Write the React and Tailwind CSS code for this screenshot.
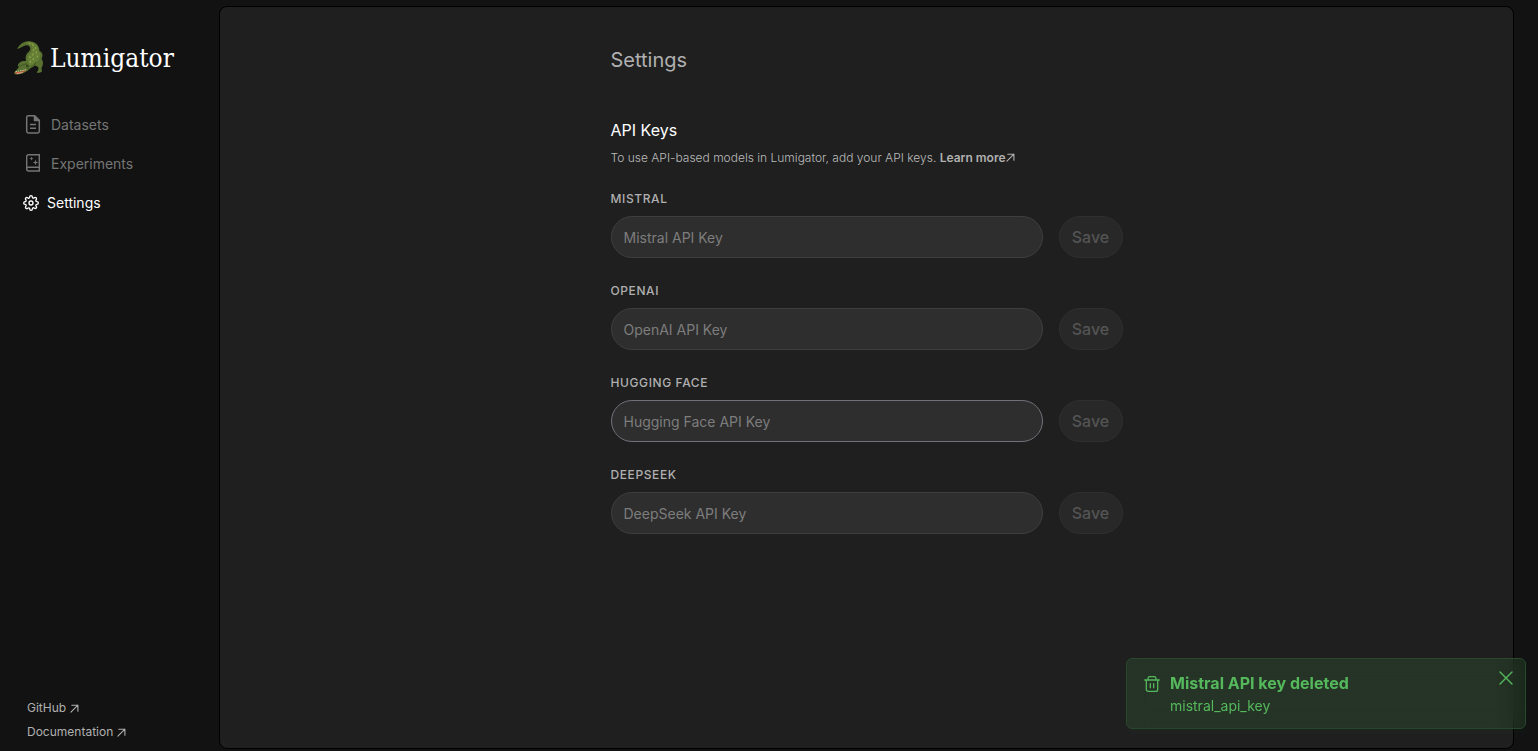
import React from 'react';
import { FiSettings } from 'react-icons/fi';

const providers = [
  { id: 'mistral', label: 'Mistral', placeholder: 'Mistral API Key' },
  { id: 'openai', label: 'OpenAI', placeholder: 'OpenAI API Key' },
  { id: 'huggingface', label: 'Hugging Face', placeholder: 'Hugging Face API Key', active: true },
  { id: 'deepseek', label: 'DeepSeek', placeholder: 'DeepSeek API Key' },
];

function Crocodile() {
  return (
    <svg width="32" height="36" viewBox="0 0 32 36" aria-hidden="true">
      <path d="M4 9C7 4 10 1.200 16 1.200C22.500 1.200 26.500 5.500 26.500 11C29.500 12.500 30.500 15 28.500 19C31 22 30 25 28.500 28L29 31.500C27.500 33 25.500 32.500 24 33C23.500 31.500 25.500 31 25.500 28.500C25.500 26.500 24 26.500 22 25.500C20 27 18.500 27.500 16.500 29C14 31.500 9 34.500 4 34.500C1 34.500 .5 33 2 31.500C4 29.500 5.500 28 6 26.500C4 26.500 4.500 24 8 21.500C10 20.500 11 21 13 21C12 16 13.500 13.500 16 11.500C18 9.500 17.500 6.500 15 5.500C11.500 4.500 7.500 8.500 4 9Z" fill="#587130" />
      <path d="M14 1.700C22 1.200 25.500 6 25.500 11C28 13.500 27.500 17 25.500 20C23.500 22.500 20.500 25 17 25.500C15 23.500 14 20 15 16C16 13.500 20 12.500 19.500 8C19 5 16.500 3.500 12.500 3.200Z" fill="#657f36" />
      <path d="M6 26C8 26.500 10 24 13 24C16 24.500 16 27 14.500 29M18 27.500C20.500 26.500 22 24.500 22.500 22" fill="none" stroke="#405820" strokeWidth="1" />
      <path d="M16.500 3.200l.5.500M19.500 4.500l.3.700M22.500 7.500v.8M20.500 9.500l-.2 1M23.500 12l-.2 1M20 14l-.3 1M24.500 16l-.4 1M17 16.500l-.2 1M20.500 18.500l-.4 1M17.500 21.500l-.4.800" stroke="#95a548" strokeWidth="1.200" strokeLinecap="round" />
      <path d="M2.300 31.800C5.500 32.500 9 31.500 13.500 29.700C11.500 32 7.500 34 4 33.700C2.500 33.600 2 32.800 2.300 31.800Z" fill="#cc5a42" />
      <path d="M2.500 31.700L13.200 29.700M4 33.700L9.500 32.500" stroke="#ead9bc" strokeWidth=".8" strokeDasharray="1.500 .8" />
      <circle cx="14" cy="26" r="1" fill="#26371b" />
    </svg>
  );
}

function DocumentIcon() {
  return (
    <svg width="16" height="20" viewBox="0 0 16 20" fill="none" stroke="currentColor" strokeWidth="1.500" strokeLinejoin="round" aria-hidden="true">
      <path d="M3 .8H9.500L14.300 5.500V16.200A1.700 1.700 0 0 1 12.600 17.900H3.400A1.700 1.700 0 0 1 1.700 16.200V2.500A1.700 1.700 0 0 1 3 .8Z" />
      <path d="M9.500 .8V5.500H14.300Z" fill="currentColor" />
      <path d="M5 9.500H11M5 13.200H11" />
    </svg>
  );
}

function ExperimentsIcon() {
  return (
    <svg width="16" height="20" viewBox="0 0 16 20" fill="none" stroke="currentColor" strokeWidth="1.400" aria-hidden="true">
      <path d="M14.300 .8H3.400A1.700 1.700 0 0 0 1.700 2.500V15A2 2 0 0 0 3.700 17H14.300V.8ZM1.700 15A2 2 0 0 1 3.700 13.200H14.300" />
      <path d="M6.500 2.800L7.100 4.100L8.400 4.700L7.100 5.300L6.500 6.600L5.900 5.300L4.600 4.700L5.900 4.100Z" fill="currentColor" stroke="none" />
      <path d="M10.500 5.500L11.200 7.800L13.300 8.500L11.200 9.200L10.500 11.500L9.800 9.200L7.700 8.500L9.800 7.800Z" fill="currentColor" stroke="none" />
    </svg>
  );
}

function ArrowUpRight({ className }) {
  return (
    <svg width="9" height="9" viewBox="0 0 9 9" fill="none" stroke="currentColor" strokeWidth="1.100" strokeLinecap="round" strokeLinejoin="round" className={className} aria-hidden="true">
      <path d="M1.800 1.200H7.900V7.300M7.900 1.200L.9 8.200" />
    </svg>
  );
}

function TrashIcon() {
  return (
    <svg width="16" height="16" viewBox="0 0 16 16" fill="none" stroke="currentColor" strokeWidth="1.300" strokeLinecap="round" strokeLinejoin="round" aria-hidden="true">
      <path d="M.7 4H15.300M4 4V2.500A1.900 1.900 0 0 1 5.900 .7H10.100A1.900 1.900 0 0 1 12 2.500V4M2.300 4V13.400A1.900 1.900 0 0 0 4.200 15.300H11.800A1.900 1.900 0 0 0 13.700 13.400V4M6.300 7.700V11.700M9.700 7.700V11.700" />
    </svg>
  );
}

function Sidebar() {
  return (
    <aside className="flex w-[219px] shrink-0 flex-col">
      <a href="#" className="mt-10 ml-[13px] flex h-9 items-center gap-[5px] text-white">
        <Crocodile />
        <span className="font-['DejaVu_Serif_Condensed','DejaVu_Serif',serif] text-[26px] leading-9">Lumigator</span>
      </a>
      <nav className="mt-[29px] flex flex-col text-sm leading-[39px] text-[#757575]">
        <a href="#datasets" className="flex items-center gap-2.5 pl-[25px]">
          <DocumentIcon />
          Datasets
        </a>
        <a href="#experiments" className="flex items-center gap-2.5 pl-[25px]">
          <ExperimentsIcon />
          Experiments
        </a>
        <a href="#settings" aria-current="page" className="flex items-center gap-2 pl-[23px] text-white">
          <FiSettings className="size-4" strokeWidth={2} />
          Settings
        </a>
      </nav>
      <footer className="mt-auto mb-[7px] ml-[27px] flex flex-col text-xs leading-6 text-[#b0b0b0]">
        <a href="#github" className="flex items-center gap-1">GitHub <ArrowUpRight /></a>
        <a href="#documentation" className="flex items-center gap-1">Documentation <ArrowUpRight /></a>
      </footer>
    </aside>
  );
}

function KeyField({ id, label, placeholder, active }) {
  return (
    <div>
      <label htmlFor={id} className="block text-xs font-medium uppercase leading-[18px] tracking-wider text-[#b0b0b0]">
        {label}
      </label>
      <div className="mt-2 flex gap-4">
        <input
          id={id}
          type="text"
          placeholder={placeholder}
          className={`h-[42px] min-w-0 flex-1 rounded-full border bg-[#2e2e2e] px-3 text-sm text-white outline-none placeholder:text-[#7d7d7d] ${active ? 'border-[#71717a]' : 'border-[#3e3e3e]'}`}
        />
        <button type="button" disabled className="h-[42px] w-16 rounded-full border border-[#2f2f2f] bg-[#282828] text-base font-medium text-[#545454]">
          Save
        </button>
      </div>
    </div>
  );
}

function Toast() {
  return (
    <div role="alert" className="fixed right-3 bottom-[22px] flex h-[71px] w-[400px] gap-2.5 rounded-md border border-[#28482d] bg-[#51b95a]/14 pl-[17px] text-[#55b95c] shadow-[0_4px_8px_rgba(34,197,94,0.04)] backdrop-blur-[10px]">
      <div className="mt-[17px]"><TrashIcon /></div>
      <div className="mt-3 flex-1">
        <p className="text-base font-bold leading-6">Mistral API key deleted</p>
        <p className="text-sm leading-[22px]">mistral_api_key</p>
      </div>
      <button type="button" aria-label="Close" className="mt-[5px] mr-[5px] flex size-7 items-center justify-center">
        <svg width="14" height="14" viewBox="0 0 14 14" fill="none" stroke="currentColor" strokeWidth="1.400" strokeLinecap="round" aria-hidden="true">
          <path d="M1 1L13 13M13 1L1 13" />
        </svg>
      </button>
    </div>
  );
}

export default function App() {
  return (
    <div className="flex min-h-screen bg-[#121212] font-['Inter',sans-serif]">
      <Sidebar />
      <main className="mt-1.5 mr-6 mb-0.5 flex-1 rounded-lg border border-black bg-[#1f1f1f]">
        <div className="mx-auto max-w-lg pt-[37px]">
          <h1 className="text-xl leading-8 text-[#b0b0b0]">Settings</h1>
          <h2 className="mt-[42px] text-base leading-6 text-white">API Keys</h2>
          <p className="mt-[7px] text-xs font-light leading-[18px] text-[#bbbbbb]">
            To use API-based models in Lumigator, add your API keys.{' '}
            <a href="#learn-more" className="font-semibold text-[#b0b0b0]">
              Learn more<ArrowUpRight className="inline-block align-baseline" />
            </a>
          </p>
          <form className="mt-[23px] flex flex-col gap-6">
            {providers.map((provider) => (
              <KeyField key={provider.id} {...provider} />
            ))}
          </form>
        </div>
      </main>
      <Toast />
    </div>
  );
}
